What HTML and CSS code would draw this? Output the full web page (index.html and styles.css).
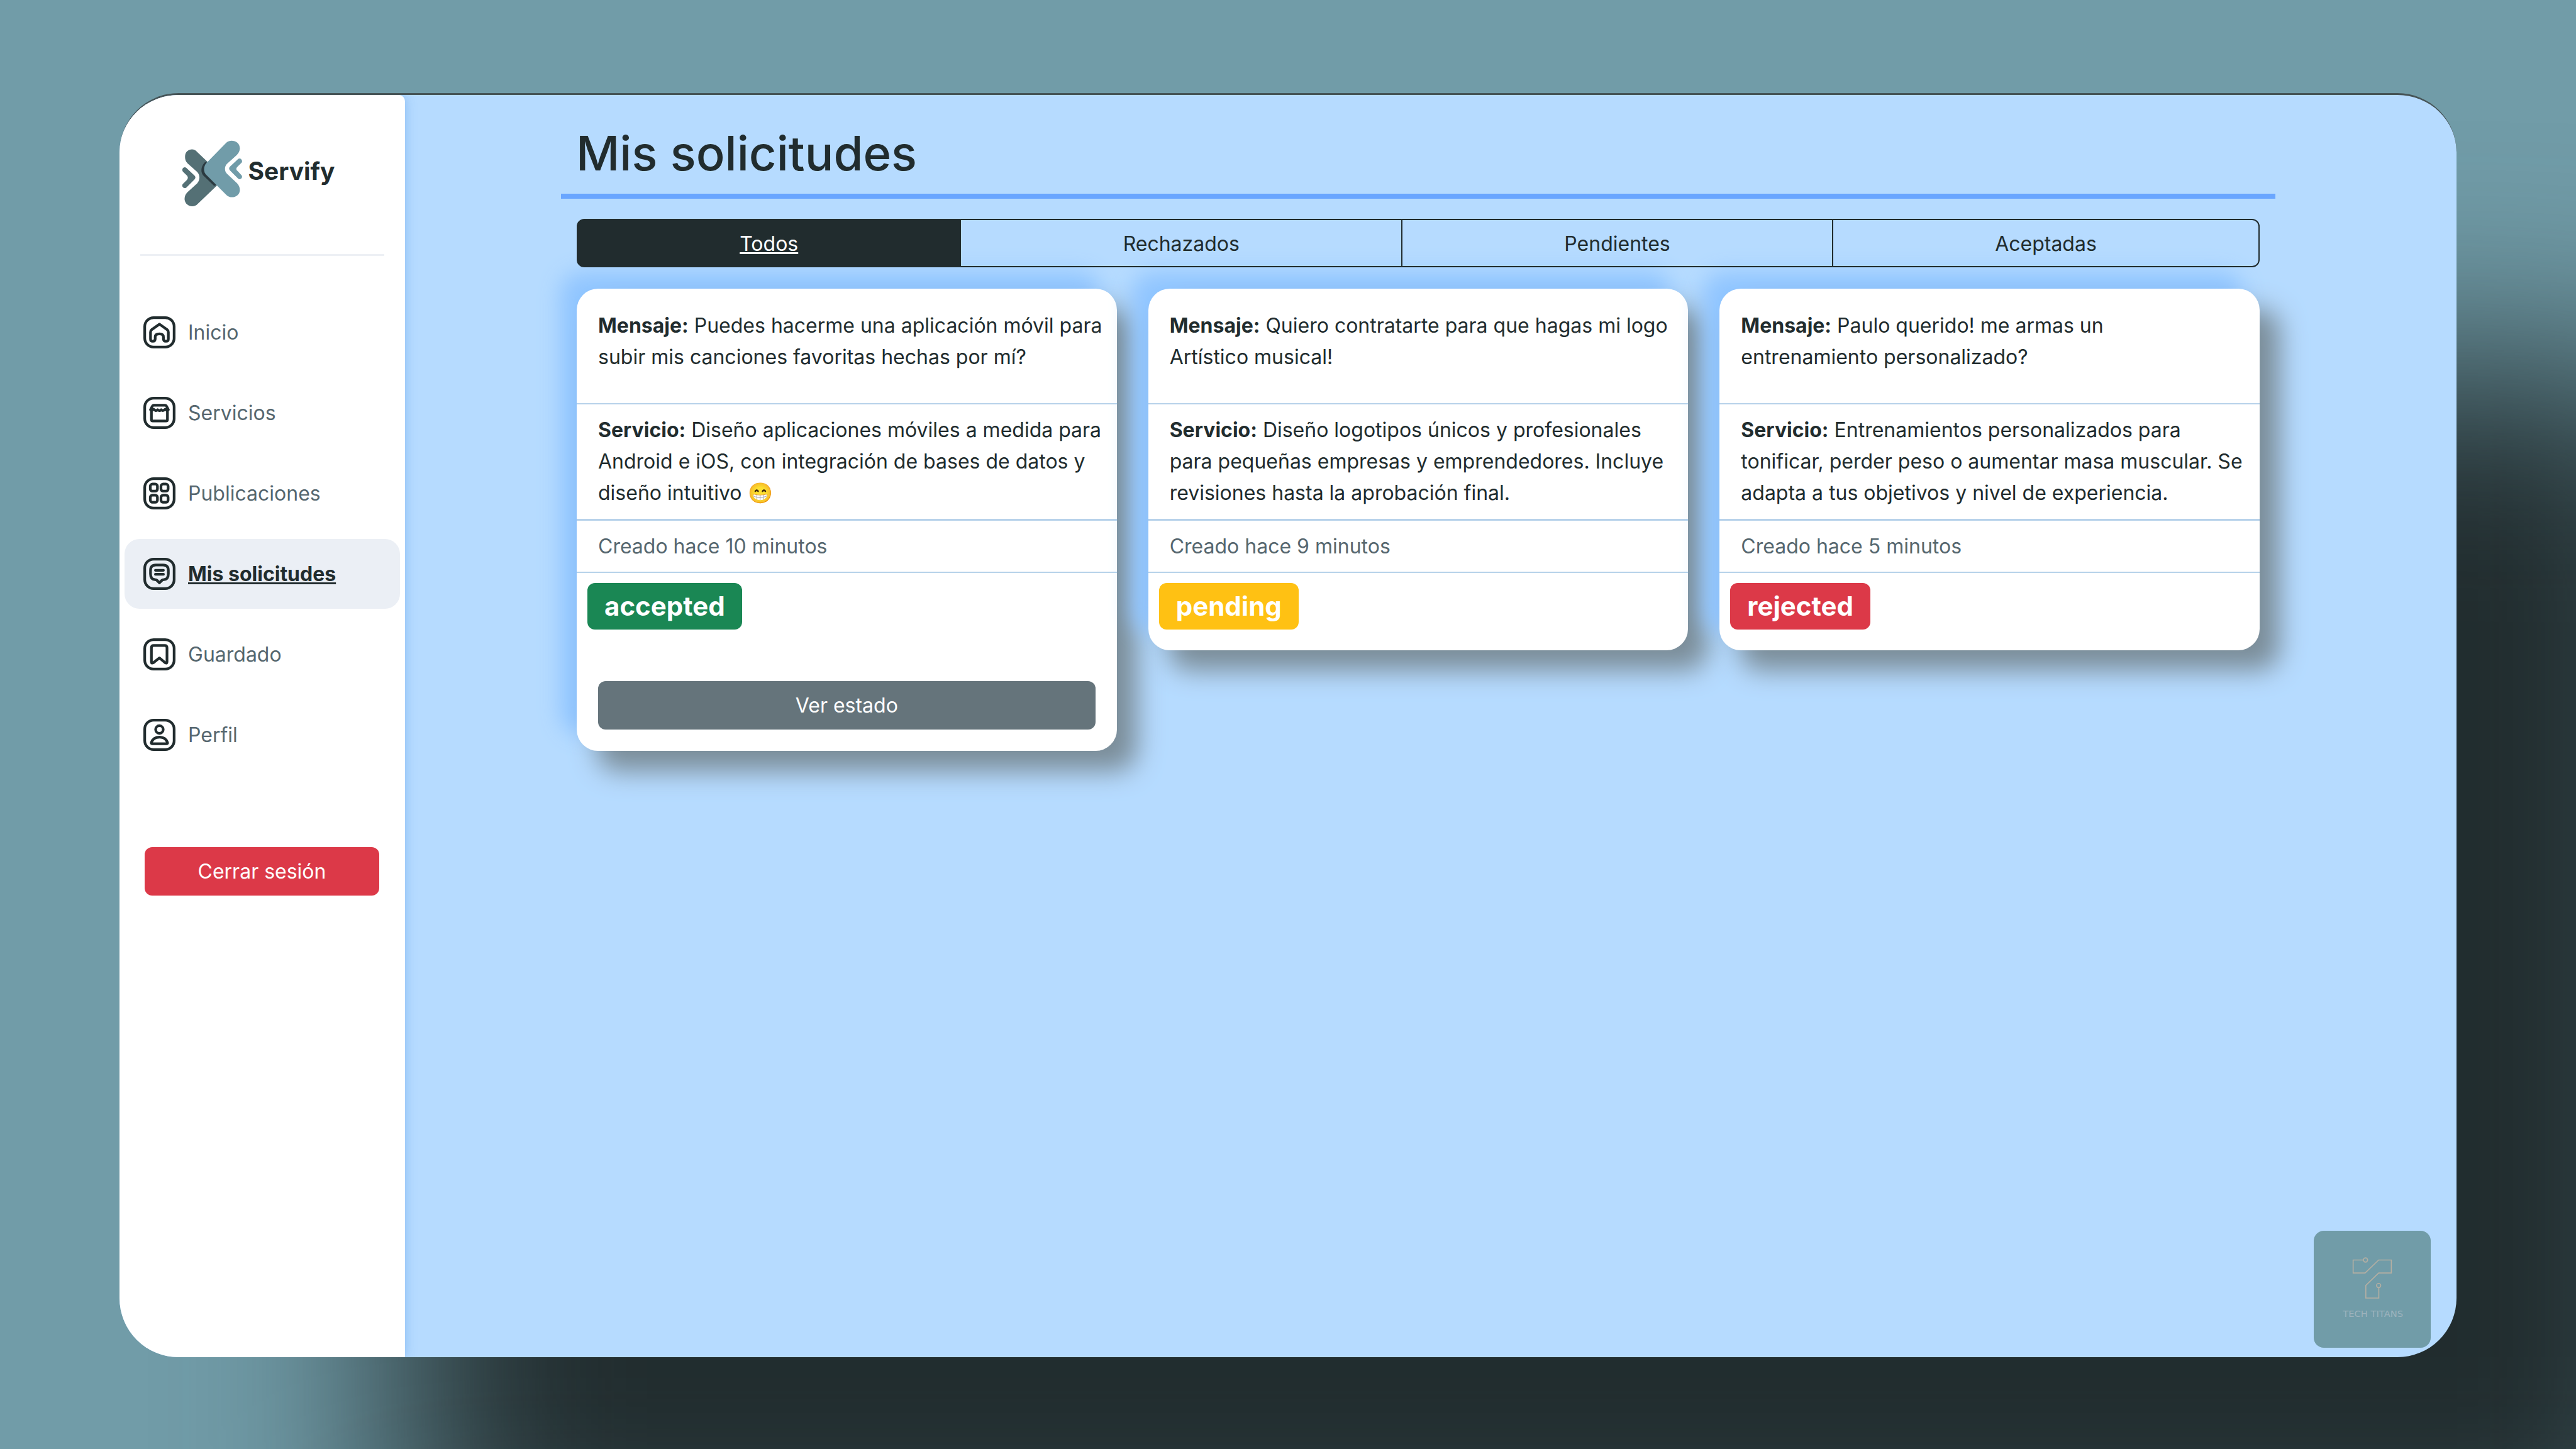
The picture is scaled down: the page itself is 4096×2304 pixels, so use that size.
FILE: index.html
```html
<!DOCTYPE html>
<html lang="es">
<head>
<meta charset="utf-8">
<meta name="viewport" content="width=device-width, initial-scale=1">
<title>Servify - Mis solicitudes</title>
<link rel="stylesheet" href="styles.css">
</head>
<body>
<div class="stage">
<div class="window">
  <aside class="sidebar">
    <a class="brand" href="#">
      <svg class="brand-mark" viewBox="147 113 136 148" aria-hidden="true">
        <path fill="#547075" d="M181 139C173 129 154 133 154 150C154 157 156 161 160 165L181 184C188 191 188 202 181 210L160 229C156 233 153 237 153 246C155 262 174 265 182 256L227 213L204 161Z"/>
        <path fill="none" stroke="#2b3a40" stroke-width="6" stroke-linecap="round" d="M200 165C192 174 192 185 198 191L220 212"/>
        <path fill="#547075" d="M157 175C152 171 145 177 149 183L158 192C161 195 161 199 158 202L149 211C145 216 151 223 157 219L175 201C178 198 178 195 175 192Z"/>
        <path fill="#719ca9" d="M246 119C254 110 277 113 277 132C276 138 274 142 270 146L248 166C242 172 242 182 248 188L270 209C274 213 277 218 277 225C276 241 256 245 247 236L202 191C195 184 195 171 202 164Z"/>
        <path fill="#719ca9" d="M273 155C278 151 284 158 281 163L272 172C268 176 268 179 272 182L281 192C284 197 278 203 273 199L255 181C252 178 252 175 255 172Z"/>
      </svg>
      <span class="brand-name">Servify</span>
    </a>
    <nav class="menu" aria-label="Principal">
      <a class="menu-item" href="#">
        <svg class="menu-icon" viewBox="0 0 72 72" aria-hidden="true"><rect x="3" y="3" width="66" height="66" rx="20"/><path d="M36 17.500L19 29.500Q16 32 16 35.500V51Q16 56 21 56Q26.500 56 26.500 50.500V46.500Q26.500 39.500 35.750 39.500Q45 39.500 45 46.500V50.500Q45 56 50.500 56Q56 56 56 51V35.500Q56 32 53 29.500Z"/></svg>
        <span>Inicio</span>
      </a>
      <a class="menu-item" href="#">
        <svg class="menu-icon" viewBox="0 0 72 72" aria-hidden="true"><rect x="3" y="3" width="66" height="66" rx="20"/><path d="M18 30V51Q18 54 21 54H51Q54 54 54 51V30M23 19H49Q51 19 52 21L56 29Q53 32 49 28Q44 33 40 29Q36 33 32 29Q28 33 23 28Q19 32 16 29L20 21Q21 19 23 19Z"/></svg>
        <span>Servicios</span>
      </a>
      <a class="menu-item" href="#">
        <svg class="menu-icon" viewBox="0 0 72 72" aria-hidden="true"><rect x="3" y="3" width="66" height="66" rx="20"/><rect x="15.500" y="15" width="16" height="16" rx="5"/><rect x="39.500" y="15" width="16" height="16" rx="5"/><rect x="15.500" y="40" width="16" height="16" rx="5"/><rect x="39.500" y="40" width="16" height="16" rx="5"/></svg>
        <span>Publicaciones</span>
      </a>
      <a class="menu-item active" href="#" aria-current="page">
        <svg class="menu-icon" viewBox="0 0 72 72" aria-hidden="true"><rect x="3" y="3" width="66" height="66" rx="20"/><path d="M28 16H44Q56 16 56 28V36Q56 48 46 49Q43 49 41 51L36 56L31 51Q29 49 26 49Q16 48 16 36V28Q16 16 28 16ZM27 28H45M27 37H45"/></svg>
        <span>Mis solicitudes</span>
      </a>
      <a class="menu-item" href="#">
        <svg class="menu-icon" viewBox="0 0 72 72" aria-hidden="true"><rect x="3" y="3" width="66" height="66" rx="20"/><path d="M23 16H48Q53 16 53 21V53Q53 57 49 55L36 44L22 55Q18 57 18 53V21Q18 16 23 16Z"/></svg>
        <span>Guardado</span>
      </a>
      <a class="menu-item" href="#">
        <svg class="menu-icon" viewBox="0 0 72 72" aria-hidden="true"><rect x="3" y="3" width="66" height="66" rx="20"/><circle cx="36" cy="24" r="8.500"/><path d="M20 56Q17 56 18 53Q22 41 36 41Q50 41 54 53Q55 56 52 56Z"/></svg>
        <span>Perfil</span>
      </a>
    </nav>
    <button class="logout" type="button">Cerrar sesión</button>
  </aside>

  <main class="content">
    <h1 class="title">Mis solicitudes</h1>
    <div class="requests">
      <div class="tabs" role="group" aria-label="Filtrar solicitudes">
        <button class="tab selected" type="button" aria-pressed="true">Todos</button>
        <button class="tab" type="button">Rechazados</button>
        <button class="tab" type="button">Pendientes</button>
        <button class="tab" type="button">Aceptadas</button>
      </div>
      <div class="cards">
        <article class="card">
          <p class="message"><strong>Mensaje:</strong> Puedes hacerme una aplicación móvil para subir mis canciones favoritas hechas por mí?</p>
          <p class="service"><strong>Servicio:</strong> Diseño aplicaciones móviles a medida para Android e iOS, con integración de bases de datos y diseño intuitivo 😁</p>
          <p class="created">Creado hace 10 minutos</p>
          <div class="status"><span class="badge accepted">accepted</span></div>
          <div class="actions"><button class="view" type="button">Ver estado</button></div>
        </article>
        <article class="card">
          <p class="message"><strong>Mensaje:</strong> Quiero contratarte para que hagas mi logo Artístico musical!</p>
          <p class="service"><strong>Servicio:</strong> Diseño logotipos únicos y profesionales para pequeñas empresas y emprendedores. Incluye revisiones hasta la aprobación final.</p>
          <p class="created">Creado hace 9 minutos</p>
          <div class="status"><span class="badge pending">pending</span></div>
        </article>
        <article class="card">
          <p class="message"><strong>Mensaje:</strong> Paulo querido! me armas un<br>entrenamiento personalizado?</p>
          <p class="service"><strong>Servicio:</strong> Entrenamientos personalizados para tonificar, perder peso o aumentar masa muscular. Se adapta a tus objetivos y nivel de experiencia.</p>
          <p class="created">Creado hace 5 minutos</p>
          <div class="status"><span class="badge rejected">rejected</span></div>
        </article>
      </div>
    </div>
  </main>

  <a class="maker" href="#" aria-label="Tech Titans">
    <svg class="maker-mark" viewBox="163 157 784 784">
      <g fill="none" stroke="#b4afa3" stroke-width="7">
        <path d="M496 353H427V440H507L598 353H683V440H598L512 523V608H599V538"/>
        <circle cx="510" cy="353" r="14"/>
        <circle cx="598" cy="524" r="14"/>
      </g>
      <text class="maker-name" x="560" y="733" text-anchor="middle">TECH TITANS</text>
    </svg>
  </a>
</div>
</div>
</body>
</html>
```
FILE: styles.css
```css
* {
  box-sizing: border-box;
}

body {
  margin: 0;
  min-height: 100vh;
  display: flex;
  padding: 148px 190px 146px;
  overflow: hidden;
  background: #719ca8;
  color: #212c2e;
  font-family: Inter, "Liberation Sans", sans-serif;
  font-size: 32px;
  line-height: 50px;
}

button {
  font: inherit;
  cursor: pointer;
}

.stage {
  position: relative;
  isolation: isolate;
  flex: 1;
  display: flex;
}

/* Wide soft shadow, softer than box-shadow can blur */
.stage::before {
  content: "";
  position: absolute;
  z-index: -1;
  inset: 440px -400px -400px 440px;
  border-radius: 94px;
  background: #212c2e;
  filter: blur(165px);
}

.window {
  position: relative;
  flex: 1;
  display: flex;
  overflow: hidden;
  border-top: 3px solid #465457;
  border-radius: 94px;
  background: #b6dbff;
}

/* Sidebar */

.sidebar {
  flex: none;
  width: 454px;
  display: flex;
  flex-direction: column;
  background: #fff;
  border-top-right-radius: 10px;
  box-shadow: 0 0 18px rgba(70, 140, 225, 0.4);
}

.brand {
  display: flex;
  align-items: center;
  justify-content: center;
  gap: 8px;
  height: 256px;
  margin: 0 33px;
  padding: 0 12px 5px 0;
  border-bottom: 3px solid #edf0f5;
  color: #212c2e;
  text-decoration: none;
}

.brand-mark {
  width: 97px;
  height: 105px;
}

.brand-name {
  padding-bottom: 6px;
  font-size: 39px;
  font-weight: 700;
}

.menu {
  display: flex;
  flex-direction: column;
  gap: 17px;
  padding: 66px 8px 0;
}

.menu-item {
  display: flex;
  align-items: center;
  gap: 20px;
  height: 111px;
  padding: 0 30px;
  border-radius: 24px;
  color: #56676f;
  text-decoration: none;
}

.menu-item.active {
  background: #ebeff5;
  color: #212c2e;
  font-weight: 700;
  text-decoration: underline;
}

.menu-icon {
  flex: none;
  width: 51px;
  height: 51px;
  fill: none;
  stroke: #212c2e;
  stroke-width: 6;
  stroke-linejoin: round;
  stroke-linecap: round;
}

.logout {
  height: 77px;
  margin: 123px 41px 0 40px;
  border: 0;
  border-radius: 12px;
  background: #dc3948;
  color: #fff;
}

/* Content */

.content {
  flex: 1;
  padding: 42px 288px 0 248px;
}

.title {
  margin: 0 0 32px;
  padding: 0 24px 15px;
  border-bottom: 8px solid #6aa6ff;
  font-size: 76px;
  font-weight: 500;
  line-height: 100px;
}

.requests {
  padding: 0 25px;
}

.tabs {
  display: flex;
  height: 77px;
  margin-bottom: 34px;
}

.tab {
  position: relative;
  z-index: 1;
  flex: 1 1 auto;
  margin-left: -2px;
  padding: 2px 24px 0;
  border: 2px solid #212c2e;
  background: transparent;
  color: #212c2e;
}

.tab:first-child {
  margin-left: 0;
  border-radius: 12px 0 0 12px;
}

.tab:last-child {
  border-radius: 0 12px 12px 0;
}

.tab.selected {
  background: #212c2e;
  color: #fff;
  text-decoration: underline;
}

.cards {
  display: grid;
  grid-template-columns: repeat(3, 1fr);
  gap: 50px;
  align-items: start;
}

.card {
  border-radius: 34px;
  background: #fff;
  box-shadow:
    32px 32px 42px #7b8d99,
    -26px -26px 34px #90c5ff;
}

.card p {
  margin: 0;
  padding: 16px 16px 16px 34px;
  border-bottom: 2px solid #b7d2ea;
}

.card .message {
  padding-top: 34px;
  padding-bottom: 48px;
}

.card .service {
  border-bottom-width: 3px;
}

.card .created {
  padding-bottom: 15px;
  color: #56676f;
}

.status {
  display: flex;
  padding: 16px 17px 33px;
}

.badge {
  padding: 12px 27px;
  border-radius: 12px;
  color: #fff;
  font-size: 42px;
  font-weight: 700;
  line-height: 50px;
}

.accepted {
  background: #1a8754;
}

.pending {
  background: #ffc113;
}

.rejected {
  background: #dc3948;
}

.actions {
  display: flex;
  padding: 49px 34px 34px;
}

.view {
  flex: 1;
  height: 77px;
  border: 0;
  border-radius: 12px;
  background: #65747b;
  color: #fff;
}

/* Maker badge, floating over the corner of the window */

.maker {
  position: absolute;
  right: 41px;
  bottom: 15px;
  width: 186px;
  height: 186px;
  border-radius: 16px;
  background: #719ca8;
}

.maker-mark {
  display: block;
  width: 100%;
  height: 100%;
}

.maker-name {
  fill: #9db3bd;
  font-family: "DejaVu Sans", sans-serif;
  font-size: 62px;
}
```
